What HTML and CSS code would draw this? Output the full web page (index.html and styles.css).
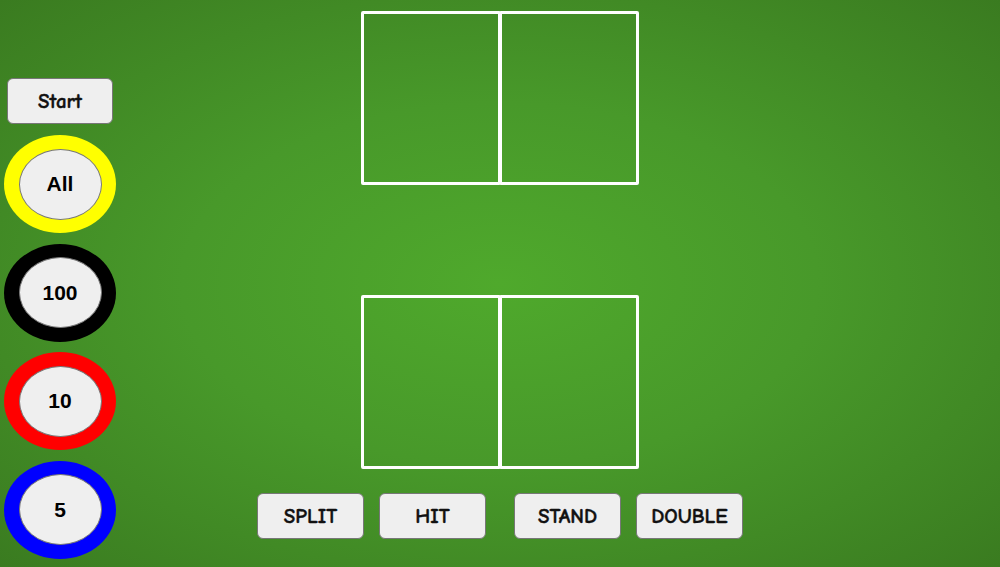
FILE: index.html
```html
<!DOCTYPE html>
<html>
<head>
<meta charset="utf-8">
<link rel="stylesheet" href="styles.css">
</head>
<body>
<div class="table">
  <div class="side">
    <button class="btn start">Start</button>
    <div class="chip chip-yellow"><div class="chip-face">All</div></div>
    <div class="chip chip-black"><div class="chip-face">100</div></div>
    <div class="chip chip-red"><div class="chip-face">10</div></div>
    <div class="chip chip-blue"><div class="chip-face">5</div></div>
  </div>
  <div class="main">
    <div class="hand dealer">
      <div class="slot"></div>
      <div class="slot"></div>
    </div>
    <div class="hand player">
      <div class="slot"></div>
      <div class="slot"></div>
    </div>
    <div class="actions">
      <div class="group">
        <button class="btn">SPLIT</button>
        <button class="btn">HIT</button>
      </div>
      <div class="group">
        <button class="btn">STAND</button>
        <button class="btn">DOUBLE</button>
      </div>
    </div>
  </div>
  <div class="spacer"></div>
</div>
</body>
</html>
```
FILE: styles.css
```css
html, body {
  margin: 0;
  padding: 0;
  width: 1000px;
  height: 567px;
  overflow: hidden;
}
body {
  background: radial-gradient(ellipse farthest-corner at 50% 50%, #4fa92c 0%, #48992a 45%, #3a7b20 100%);
}
.table {
  display: grid;
  grid-template-columns: 120px 1fr 120px;
  height: 567px;
}
.side {
  display: flex;
  flex-direction: column;
  align-items: center;
  padding-top: 78px;
}
.btn {
  width: 107px;
  height: 46px;
  box-sizing: border-box;
  background: #efefef;
  border: 1px solid #777;
  border-radius: 6px;
  font-family: "Comic Sans MS", "Comic Neue", "DejaVu Sans", sans-serif;
  font-weight: bold;
  font-size: 21px;
  -webkit-text-stroke: 0.4px #111;
  color: #111;
  padding: 0;
  margin: 0;
}
.start {
  width: 106px;
  margin-bottom: 11px;
}
.chip {
  width: 112px;
  height: 98px;
  border-radius: 50%;
  display: flex;
  align-items: center;
  justify-content: center;
  margin-bottom: 10.5px;
  flex-shrink: 0;
}
.chip-yellow { background: #ffff00; }
.chip-black { background: #000; }
.chip-red { background: #ff0000; }
.chip-blue { background: #0000ff; }
.chip-face {
  width: 83px;
  height: 71px;
  box-sizing: border-box;
  border-radius: 50%;
  background: #efefef;
  border: 1px solid #777;
  display: flex;
  align-items: center;
  justify-content: center;
  font-family: "Liberation Sans", Arial, sans-serif;
  font-weight: bold;
  font-size: 21px;
  color: #000;
}
.main {
  display: flex;
  flex-direction: column;
  align-items: center;
  padding-top: 11px;
}
.hand {
  display: flex;
  height: 174px;
}
.dealer {
  margin-bottom: 110px;
}
.player {
  margin-bottom: 24px;
}
.slot {
  width: 140px;
  height: 174px;
  box-sizing: border-box;
  border: 3px solid #fff;
  border-radius: 2px;
}
.slot + .slot {
  margin-left: -2px;
}
.actions {
  display: flex;
  gap: 28px;
}
.group {
  display: flex;
  gap: 15px;
}
```
